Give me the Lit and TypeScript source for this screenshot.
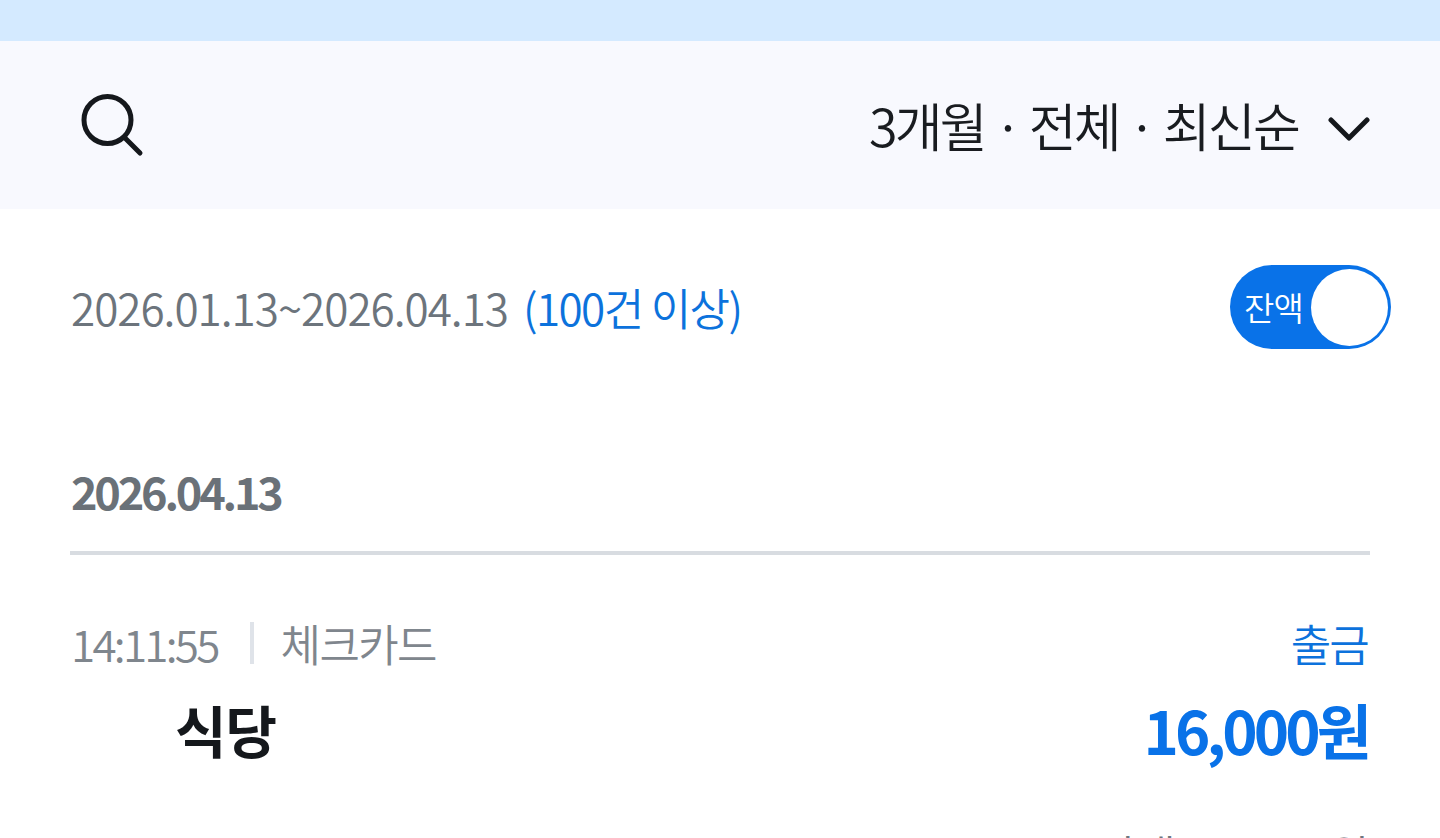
import { LitElement, html, css } from "lit";
import { customElement } from "lit/decorators.js";

@customElement("app-root")
export class AppRoot extends LitElement {
  static styles = css`
    :host {
      display: block;
      width: 1440px;
      height: 838px;
      overflow: hidden;
      background: #fff;
      font-family: "Noto Sans CJK KR", "Noto Sans", sans-serif;
    }
    .status { height: 41px; background: #d4eaff; }
    .toolbar {
      height: 168px;
      background: #f8f9fe;
      display: flex;
      align-items: center;
      justify-content: space-between;
      padding: 0 70px 0 80px;
    }
    .search { width: 64px; height: 64px; display: block; }
    .filter { display: flex; align-items: center; gap: 30px; }
    .filter-text {
      font-size: 52px;
      font-weight: 350;
      letter-spacing: -2.75px;
      line-height: 60px;
      color: #191c20;
    }
    .chev { width: 42px; height: 32px; display: block; }
    .period {
      display: flex;
      align-items: center;
      justify-content: space-between;
      padding: 56px 49px 0 71px;
    }
    .range {
      font-size: 44px;
      font-weight: 350;
      letter-spacing: -1px;
      line-height: 84px;
      color: #6c747c;
    }
    .count { color: #0c72dc; margin-left: 15px; letter-spacing: -1.6px; }
    .toggle {
      width: 161px;
      height: 84px;
      border-radius: 42px;
      background: #0972e8;
      box-sizing: border-box;
      padding: 3px;
      display: flex;
      align-items: center;
      justify-content: space-between;
    }
    .toggle-label {
      color: #fff;
      font-size: 33px;
      font-weight: 350;
      letter-spacing: -0.8px;
      padding-left: 11px;
    }
    .knob { width: 77px; height: 77px; border-radius: 50%; background: #fff; }
    .day {
      margin: 112px 70px 0 70px;
      padding: 0 0 30px 1px;
      border-bottom: 4px solid #d8dce1;
      font-size: 45px;
      font-weight: 700;
      line-height: 60px;
      letter-spacing: -3.2px;
      color: #6a7178;
    }
    .row {
      margin: 0 70px 0 71px;
      display: flex;
      justify-content: space-between;
    }
    .row.meta { margin-top: 58px; align-items: center; height: 60px; }
    .meta-left {
      display: flex;
      align-items: center;
      font-size: 44px;
      font-weight: 350;
      color: #7f868d;
    }
    .time { letter-spacing: -2.75px; }
    .card { letter-spacing: -1.7px; }
    .sep { width: 4px; height: 42px; background: #dfe3e9; margin: 0 27px 0 32px; }
    .type { color: #0c72dc; font-size: 44px; font-weight: 350; letter-spacing: -1.8px; padding-right: 2px; }
    .row.main { margin-top: 20px; align-items: center; height: 70px; }
    .name {
      font-size: 56px;
      font-weight: 700;
      letter-spacing: -1px;
      color: #15181c;
      padding-left: 104px;
    }
    .amount {
      font-size: 60px;
      font-weight: 700;
      letter-spacing: -3.9px;
      color: #0972e8;
      padding-right: 2px;
    }
    .balance {
      margin: 61px 72px 0 0;
      text-align: right;
      font-size: 44px;
      font-weight: 350;
      color: #6f767e;
      line-height: 60px;
      letter-spacing: -1.5px;
    }
  `;

  render() {
    return html`
      <div class="status"></div>
      <div class="toolbar">
        <svg class="search" viewBox="0 0 64 64" fill="none" stroke="#15181c" stroke-width="5" stroke-linecap="round">
          <circle cx="27.5" cy="27" r="23.5"></circle>
          <path d="M45 45 L60 60"></path>
        </svg>
        <div class="filter">
          <span class="filter-text">3개월 · 전체 · 최신순</span>
          <svg class="chev" viewBox="0 0 42 32" fill="none" stroke="#15181c" stroke-width="5" stroke-linecap="round" stroke-linejoin="round">
            <path d="M3 11 L21 29 L39 11"></path>
          </svg>
        </div>
      </div>
      <div class="period">
        <div class="range">2026.01.13~2026.04.13<span class="count">(100건 이상)</span></div>
        <div class="toggle"><span class="toggle-label">잔액</span><span class="knob"></span></div>
      </div>
      <div class="day">2026.04.13</div>
      <div class="row meta">
        <div class="meta-left"><span class="time">14:11:55</span><span class="sep"></span><span class="card">체크카드</span></div>
        <div class="type">출금</div>
      </div>
      <div class="row main">
        <div class="name">식당</div>
        <div class="amount">16,000원</div>
      </div>
      <div class="balance">잔액 134,000원</div>
    `;
  }
}
